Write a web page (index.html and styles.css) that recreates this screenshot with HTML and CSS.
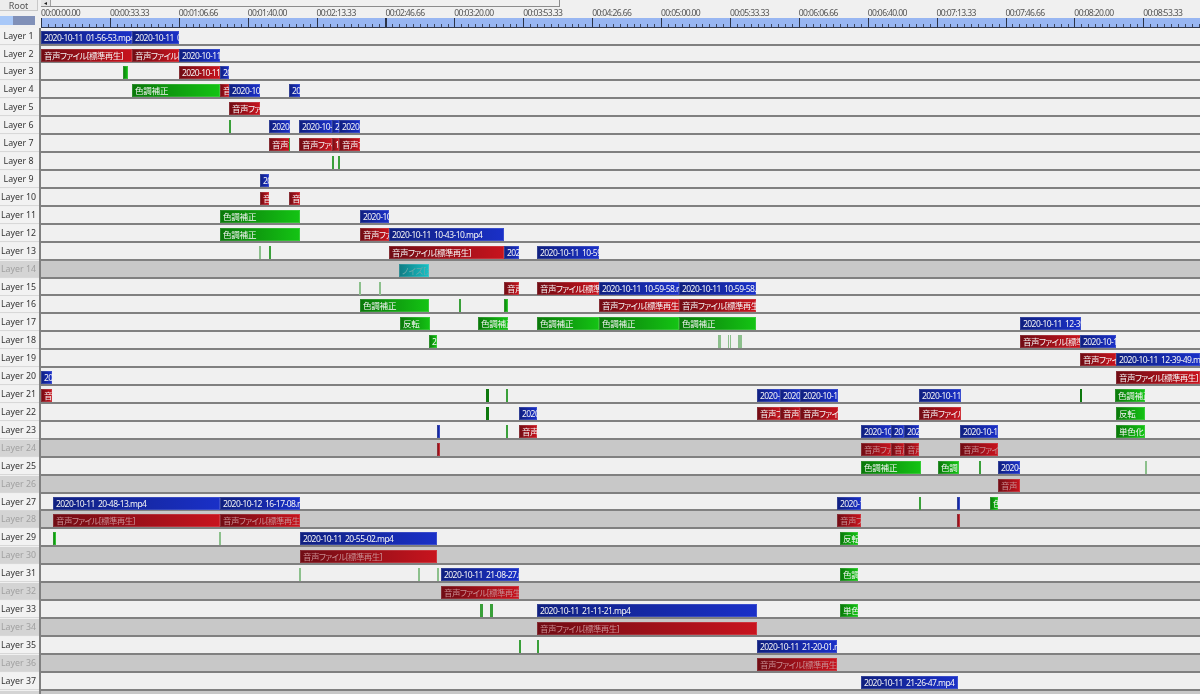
FILE: index.html
```html
<!DOCTYPE html>
<html lang="ja">
<head>
  <meta charset="UTF-8">
  <title>Timeline</title>
  <link rel="stylesheet" href="styles.css">
</head>
<body>
  <div class="timeline">
    <div class="head">
      <div class="head-left">
        <div class="root-btn">Root</div>
        <div class="swatch"><span class="swatch-light"></span><span class="swatch-dark"></span></div>
      </div>
      <div class="head-right">
        <div class="scrollbar"><span class="scroll-btn">◂</span></div>
        <div class="times">
          <span>00:00:00.00</span><span>00:00:33.33</span><span>00:01:06.66</span><span>00:01:40.00</span><span>00:02:13.33</span><span>00:02:46.66</span><span>00:03:20.00</span><span>00:03:53.33</span><span>00:04:26.66</span><span>00:05:00.00</span><span>00:05:33.33</span><span>00:06:06.66</span><span>00:06:40.00</span><span>00:07:13.33</span><span>00:07:46.66</span><span>00:08:20.00</span><span>00:08:53.33</span>
        </div>
        <div class="ruler"></div>
      </div>
    </div>

    <div class="row"><div class="label">Layer 1</div><div class="track">
      <div class="clip video" style="left:0;width:91px">2020-10-11 01-56-53.mp4</div>
      <div class="clip video" style="left:91px;width:47px">2020-10-11 02-04</div>
    </div></div>
    <div class="row"><div class="label">Layer 2</div><div class="track">
      <div class="clip audio" style="left:0;width:91px">音声ファイル[標準再生]</div>
      <div class="clip audio" style="left:91px;width:47px">音声ファイル[標準再生]</div>
      <div class="clip video" style="left:138px;width:41px">2020-10-11</div>
    </div></div>
    <div class="row"><div class="label">Layer 3</div><div class="track">
      <div class="clip fx" style="left:82px;width:5px"></div>
      <div class="clip audio" style="left:138px;width:41px">2020-10-11</div>
      <div class="clip video" style="left:179px;width:9px">2020</div>
    </div></div>
    <div class="row"><div class="label">Layer 4</div><div class="track">
      <div class="clip fx" style="left:91px;width:88px">色調補正</div>
      <div class="clip audio" style="left:179px;width:9px">音声</div>
      <div class="clip video" style="left:188px;width:31px">2020-10-11</div>
      <div class="clip video" style="left:248px;width:11px">2020</div>
    </div></div>
    <div class="row"><div class="label">Layer 5</div><div class="track">
      <div class="clip audio" style="left:188px;width:31px">音声ファイル</div>
    </div></div>
    <div class="row"><div class="label">Layer 6</div><div class="track">
      <div class="clip fx mark" style="left:188px;width:2px"></div>
      <div class="clip video" style="left:228px;width:21px">2020-10</div>
      <div class="clip video" style="left:258px;width:33px">2020-10-11</div>
      <div class="clip video" style="left:291px;width:7px">2020</div>
      <div class="clip video" style="left:298px;width:21px">2020-10</div>
    </div></div>
    <div class="row"><div class="label">Layer 7</div><div class="track">
      <div class="clip audio" style="left:228px;width:21px">音声ファ</div>
      <div class="clip fx mark" style="left:248px;width:1px"></div>
      <div class="clip audio" style="left:258px;width:33px">音声ファイル</div>
      <div class="clip audio" style="left:291px;width:7px">1</div>
      <div class="clip audio" style="left:298px;width:21px">音声ファ</div>
    </div></div>
    <div class="row"><div class="label">Layer 8</div><div class="track">
      <div class="clip fx mark" style="left:291px;width:2px"></div>
      <div class="clip fx mark" style="left:297px;width:2px"></div>
    </div></div>
    <div class="row"><div class="label">Layer 9</div><div class="track">
      <div class="clip video" style="left:219px;width:9px">2020</div>
    </div></div>
    <div class="row"><div class="label">Layer 10</div><div class="track">
      <div class="clip audio" style="left:219px;width:9px">音声</div>
      <div class="clip audio" style="left:248px;width:11px">音声</div>
    </div></div>
    <div class="row"><div class="label">Layer 11</div><div class="track">
      <div class="clip fx" style="left:179px;width:80px">色調補正</div>
      <div class="clip video" style="left:319px;width:29px">2020-10-11</div>
    </div></div>
    <div class="row"><div class="label">Layer 12</div><div class="track">
      <div class="clip fx" style="left:179px;width:80px">色調補正</div>
      <div class="clip audio" style="left:319px;width:29px">音声ファイル</div>
      <div class="clip video" style="left:348px;width:115px">2020-10-11 10-43-10.mp4</div>
    </div></div>
    <div class="row"><div class="label">Layer 13</div><div class="track">
      <div class="clip fx mark faint" style="left:218px;width:2px"></div>
      <div class="clip fx mark" style="left:228px;width:2px"></div>
      <div class="clip audio" style="left:348px;width:115px">音声ファイル[標準再生]</div>
      <div class="clip video" style="left:463px;width:15px">2020</div>
      <div class="clip video" style="left:496px;width:62px">2020-10-11 10-59</div>
    </div></div>
    <div class="row hidden"><div class="label">Layer 14</div><div class="track">
      <div class="clip noise" style="left:358px;width:30px">ノイズ[メディア]</div>
    </div></div>
    <div class="row"><div class="label">Layer 15</div><div class="track">
      <div class="clip fx mark faint" style="left:318px;width:2px"></div>
      <div class="clip fx mark faint" style="left:338px;width:2px"></div>
      <div class="clip audio" style="left:463px;width:15px">音声</div>
      <div class="clip audio" style="left:496px;width:62px">音声ファイル[標準再生]</div>
      <div class="clip video" style="left:558px;width:80px">2020-10-11 10-59-58.mp4</div>
      <div class="clip video" style="left:638px;width:77px">2020-10-11 10-59-58.mp4</div>
    </div></div>
    <div class="row"><div class="label">Layer 16</div><div class="track">
      <div class="clip fx" style="left:319px;width:69px">色調補正</div>
      <div class="clip fx mark" style="left:418px;width:2px"></div>
      <div class="clip fx" style="left:463px;width:4px"></div>
      <div class="clip audio" style="left:558px;width:80px">音声ファイル[標準再生]</div>
      <div class="clip audio" style="left:638px;width:77px">音声ファイル[標準再生]</div>
    </div></div>
    <div class="row"><div class="label">Layer 17</div><div class="track">
      <div class="clip fx" style="left:359px;width:30px">反転</div>
      <div class="clip fx" style="left:437px;width:30px">色調補正</div>
      <div class="clip fx" style="left:496px;width:62px">色調補正</div>
      <div class="clip fx" style="left:558px;width:80px">色調補正</div>
      <div class="clip fx" style="left:638px;width:77px">色調補正</div>
      <div class="clip video" style="left:979px;width:61px">2020-10-11 12-39</div>
    </div></div>
    <div class="row"><div class="label">Layer 18</div><div class="track">
      <div class="clip fx" style="left:388px;width:8px">2</div>
      <div class="clip fx mark faint" style="left:677px;width:3px"></div>
      <div class="clip fx mark faint" style="left:687px;width:1px"></div>
      <div class="clip fx mark faint" style="left:689px;width:1px"></div>
      <div class="clip fx mark faint" style="left:697px;width:4px"></div>
      <div class="clip audio" style="left:979px;width:61px">音声ファイル[標準再生]</div>
      <div class="clip video" style="left:1039px;width:36px">2020-10-11</div>
    </div></div>
    <div class="row"><div class="label">Layer 19</div><div class="track">
      <div class="clip audio" style="left:1039px;width:36px">音声ファイル</div>
      <div class="clip video" style="left:1075px;width:84px">2020-10-11 12-39-49.mp4</div>
    </div></div>
    <div class="row"><div class="label">Layer 20</div><div class="track">
      <div class="clip video" style="left:0;width:11px">20</div>
      <div class="clip audio" style="left:1075px;width:84px">音声ファイル[標準再生]</div>
    </div></div>
    <div class="row"><div class="label">Layer 21</div><div class="track">
      <div class="clip audio" style="left:0;width:11px">音声</div>
      <div class="clip fx dark" style="left:445px;width:3px"></div>
      <div class="clip fx mark" style="left:465px;width:2px"></div>
      <div class="clip video" style="left:716px;width:23px">2020-10</div>
      <div class="clip video" style="left:739px;width:20px">2020-10</div>
      <div class="clip video" style="left:759px;width:38px">2020-10-11</div>
      <div class="clip video" style="left:878px;width:42px">2020-10-11</div>
      <div class="clip fx dark" style="left:1039px;width:2px"></div>
      <div class="clip fx" style="left:1074px;width:30px">色調補正</div>
    </div></div>
    <div class="row"><div class="label">Layer 22</div><div class="track">
      <div class="clip fx dark" style="left:445px;width:3px"></div>
      <div class="clip video" style="left:478px;width:18px">2020</div>
      <div class="clip audio" style="left:716px;width:23px">音声ファ</div>
      <div class="clip audio" style="left:739px;width:20px">音声ファ</div>
      <div class="clip audio" style="left:759px;width:38px">音声ファイル</div>
      <div class="clip audio" style="left:878px;width:42px">音声ファイル</div>
      <div class="clip fx" style="left:1075px;width:29px">反転</div>
    </div></div>
    <div class="row"><div class="label">Layer 23</div><div class="track">
      <div class="clip video" style="left:396px;width:3px"></div>
      <div class="clip fx mark" style="left:465px;width:2px"></div>
      <div class="clip audio" style="left:478px;width:18px">音声</div>
      <div class="clip video" style="left:820px;width:30px">2020-10</div>
      <div class="clip video" style="left:850px;width:13px">20</div>
      <div class="clip video" style="left:863px;width:15px">2020</div>
      <div class="clip video" style="left:919px;width:38px">2020-10-11</div>
      <div class="clip fx" style="left:1075px;width:29px">単色化</div>
    </div></div>
    <div class="row hidden"><div class="label">Layer 24</div><div class="track">
      <div class="clip audio" style="left:396px;width:3px"></div>
      <div class="clip audio" style="left:820px;width:30px">音声ファイル</div>
      <div class="clip audio" style="left:850px;width:13px">音声</div>
      <div class="clip audio" style="left:863px;width:15px">音声</div>
      <div class="clip audio" style="left:919px;width:38px">音声ファイル</div>
    </div></div>
    <div class="row"><div class="label">Layer 25</div><div class="track">
      <div class="clip fx" style="left:820px;width:60px">色調補正</div>
      <div class="clip fx" style="left:897px;width:21px">色調</div>
      <div class="clip fx mark" style="left:938px;width:2px"></div>
      <div class="clip video" style="left:957px;width:22px">2020-10</div>
      <div class="clip fx mark faint" style="left:1104px;width:2px"></div>
    </div></div>
    <div class="row hidden"><div class="label">Layer 26</div><div class="track">
      <div class="clip audio" style="left:957px;width:22px">音声</div>
    </div></div>
    <div class="row"><div class="label">Layer 27</div><div class="track">
      <div class="clip video" style="left:12px;width:167px">2020-10-11 20-48-13.mp4</div>
      <div class="clip video" style="left:179px;width:80px">2020-10-12 16-17-08.mp4</div>
      <div class="clip video" style="left:796px;width:24px">2020-10</div>
      <div class="clip fx mark" style="left:878px;width:2px"></div>
      <div class="clip video" style="left:916px;width:2px"></div>
      <div class="clip fx" style="left:949px;width:8px">色</div>
    </div></div>
    <div class="row hidden"><div class="label">Layer 28</div><div class="track">
      <div class="clip audio" style="left:12px;width:167px">音声ファイル[標準再生]</div>
      <div class="clip audio" style="left:179px;width:80px">音声ファイル[標準再生]</div>
      <div class="clip audio" style="left:796px;width:24px">音声ファ</div>
      <div class="clip audio" style="left:916px;width:2px"></div>
    </div></div>
    <div class="row"><div class="label">Layer 29</div><div class="track">
      <div class="clip fx" style="left:12px;width:3px"></div>
      <div class="clip fx mark faint" style="left:178px;width:2px"></div>
      <div class="clip video" style="left:259px;width:137px">2020-10-11 20-55-02.mp4</div>
      <div class="clip fx" style="left:799px;width:18px">反転</div>
    </div></div>
    <div class="row hidden"><div class="label">Layer 30</div><div class="track">
      <div class="clip audio" style="left:259px;width:137px">音声ファイル[標準再生]</div>
    </div></div>
    <div class="row"><div class="label">Layer 31</div><div class="track">
      <div class="clip fx mark faint" style="left:258px;width:2px"></div>
      <div class="clip fx mark faint" style="left:377px;width:2px"></div>
      <div class="clip fx mark faint" style="left:396px;width:2px"></div>
      <div class="clip video" style="left:400px;width:78px">2020-10-11 21-08-27.mp4</div>
      <div class="clip fx" style="left:799px;width:18px">色調</div>
    </div></div>
    <div class="row hidden"><div class="label">Layer 32</div><div class="track">
      <div class="clip audio" style="left:400px;width:78px">音声ファイル[標準再生]</div>
    </div></div>
    <div class="row"><div class="label">Layer 33</div><div class="track">
      <div class="clip fx mark" style="left:439px;width:3px"></div>
      <div class="clip fx mark" style="left:449px;width:3px"></div>
      <div class="clip video" style="left:496px;width:220px">2020-10-11 21-11-21.mp4</div>
      <div class="clip fx" style="left:799px;width:18px">単色化</div>
    </div></div>
    <div class="row hidden"><div class="label">Layer 34</div><div class="track">
      <div class="clip audio" style="left:496px;width:220px">音声ファイル[標準再生]</div>
    </div></div>
    <div class="row"><div class="label">Layer 35</div><div class="track">
      <div class="clip fx mark" style="left:478px;width:2px"></div>
      <div class="clip fx mark" style="left:496px;width:2px"></div>
      <div class="clip video" style="left:716px;width:80px">2020-10-11 21-20-01.mp4</div>
    </div></div>
    <div class="row hidden"><div class="label">Layer 36</div><div class="track">
      <div class="clip audio" style="left:716px;width:80px">音声ファイル[標準再生]</div>
    </div></div>
    <div class="row"><div class="label">Layer 37</div><div class="track">
      <div class="clip video" style="left:820px;width:97px">2020-10-11 21-26-47.mp4</div>
    </div></div>
    <div class="row hidden"><div class="label">Layer 38</div><div class="track"></div></div>
  </div>
</body>
</html>
```

FILE: styles.css
```css
html, body {
  margin: 0;
  height: 100%;
  overflow: hidden;
  background: #f0f0f0;
}

.timeline {
  width: 1200px;
  height: 694px;
  overflow: hidden;
  font-family: "Noto Sans", "Noto Sans CJK JP", sans-serif;
  filter: blur(0.45px);
}

/* header */
.head {
  display: flex;
  height: 27.6px;
}

.head-left {
  flex: 0 0 41px;
  display: flex;
  flex-direction: column;
}

.root-btn {
  width: 37px;
  height: 10px;
  line-height: 11px;
  font-size: 9px;
  text-align: center;
  color: #555;
  background: #ededed;
  border-right: 1px solid #c8c8c8;
  border-bottom: 1px solid #c8c8c8;
}

.swatch {
  display: flex;
  width: 35px;
  height: 9px;
  margin-top: 5px;
}

.swatch-light {
  width: 13px;
  background: #a8c8f8;
}

.swatch-dark {
  flex: 1;
  background: #8090b8;
}

.head-right {
  flex: 1;
  display: flex;
  flex-direction: column;
  min-width: 0;
}

.scrollbar {
  width: 518px;
  height: 6px;
  border-bottom: 1px solid #8c8c8c;
  border-right: 1px solid #8c8c8c;
  display: flex;
}

.scroll-btn {
  width: 9px;
  font-size: 6px;
  line-height: 6px;
  text-align: center;
  color: #222;
  background: #e4e4e4;
  border-right: 1px solid #a0a0a0;
}

.times {
  display: flex;
  height: 11px;
  white-space: nowrap;
}

.times span {
  flex: 0 0 68.9px;
  font-size: 8.6px;
  letter-spacing: -0.65px;
  line-height: 13px;
  color: #555;
}

/* ticks are drawn with repeating gradients on top of the band */
.ruler {
  height: 9.6px;
  box-sizing: border-box;
  border-bottom: 1px solid #30384c;
  background-color: #98b6f2;
  background-image:
    repeating-linear-gradient(90deg, #2c3448 0, #2c3448 1px, transparent 1px, transparent 68.9px),
    repeating-linear-gradient(90deg, #3c4660 0, #3c4660 1px, transparent 1px, transparent 6.89px);
  background-size: 100% 9px, 100% 3px;
  background-position: 0 0, 0 6px;
  background-repeat: no-repeat;
}

/* layers */
.row {
  display: flex;
  height: 17.93px;
}

.label {
  flex: 0 0 39px;
  box-sizing: border-box;
  height: 16px;
  padding-right: 2px;
  line-height: 16px;
  font-size: 8.8px;
  text-align: center;
  color: #333;
  background: #f2f2f2;
  box-shadow: 0 1px 0 #d8d8d8;
}

.track {
  flex: 1;
  position: relative;
  box-sizing: border-box;
  background: #f0f0f0;
  border-left: 2px solid #808080;
  border-bottom: 2px solid #808080;
}

.row.hidden .label {
  color: #a0a0a0;
  background: #d4d4d4;
}

.row.hidden .track {
  background: #c8c8c8;
}

.clip {
  position: absolute;
  top: 3px;
  height: 13px;
  box-sizing: border-box;
  padding-left: 3px;
  overflow: hidden;
  white-space: nowrap;
  line-height: 13px;
  font-size: 8.5px;
  font-feature-settings: "palt";
  letter-spacing: -0.2px;
  color: #f4f4f4;
  box-shadow: inset 0 0 0 1px rgba(255, 255, 255, 0.14);
}

.video {
  background: linear-gradient(90deg, #102080, #1a30c8);
  letter-spacing: -0.55px;
  word-spacing: 1.5px;
}

.audio {
  background: linear-gradient(90deg, #700c14, #c8141e);
  letter-spacing: -0.6px;
}

.fx {
  background: linear-gradient(90deg, #0a780a, #14c414);
}

.noise {
  background: linear-gradient(90deg, #107c84, #18c0c4);
  color: #7fb0b4;
}

.row.hidden .clip {
  color: #c88c90;
}

.row.hidden .noise {
  color: #6aa8aa;
}

/* thin effect marks */
.mark {
  padding: 0;
  background: #3aa03a;
  box-shadow: none;
}

.mark.faint {
  background: #8cc08c;
}

.dark {
  padding: 0;
  background: #0e780e;
  box-shadow: none;
}
```
